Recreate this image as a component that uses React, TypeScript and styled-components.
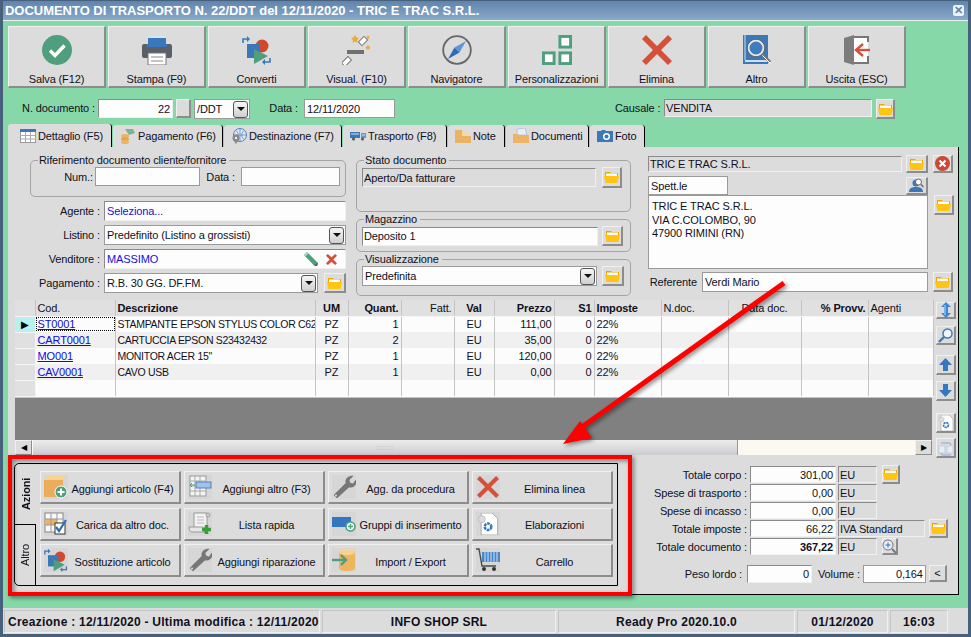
import React from 'react';
import styled, { createGlobalStyle } from 'styled-components';

const GlobalStyle = createGlobalStyle`
html, body {
  margin: 0;
  padding: 0;
  background: #86d8a8;
}
* { box-sizing: border-box; }
button { letter-spacing: inherit; }
`;

const Window = styled.div`
  position: relative;
  width: 971px;
  height: 637px;
  overflow: hidden;
  display: flex;
  flex-direction: column;
  background: #86d8a8;
  border: 3px solid #47617c;
  border-top: 1px solid #47617c;
  font-family: "Liberation Sans", Arial, sans-serif;
  font-size: 11px;
  letter-spacing: -0.12px;
  color: #10101c;
`;

const TitleBar = styled.div`
  height: 20px;
  flex: none;
  margin: 0 -3px;
  padding: 0 0 0 5px;
  display: flex;
  align-items: center;
  justify-content: space-between;
  background: linear-gradient(#5f84ad, #8aa9c9);
  border-bottom: 1px solid #e6f2ec;
  color: #fff;
  font-weight: bold;
  font-size: 13px;
  letter-spacing: -0.03px;
  white-space: nowrap;
`;

const CloseBox = styled.div`
  width: 11px;
  height: 11px;
  margin-right: 7px;
  border-radius: 2px;
  background: #eef3f8;
  color: #5f84ad;
  font-size: 11px;
  line-height: 11px;
  text-align: center;
`;

const Main = styled.div`
  flex: 1;
  min-height: 0;
  padding: 5px 0 0 5px;
  display: flex;
  flex-direction: column;
`;

const Toolbar = styled.div`
  display: flex;
  gap: 2px;
  flex: none;
`;

const raised = `
  background: #dcdcdc;
  border: 1px solid;
  border-color: #f0f0f0 #8c8c8c #8c8c8c #f0f0f0;
`;

const ToolButton = styled.button`
  ${raised}
  width: 98px;
  height: 62px;
  padding: 8px 0 0;
  font: inherit;
  color: inherit;
  display: flex;
  flex-direction: column;
  align-items: center;
  justify-content: space-between;
  border-width: 1px 2px 2px 1px;
`;

const ToolLabel = styled.span`
  height: 15px;
  margin-bottom: -1px;
  line-height: 15px;
  white-space: nowrap;
`;

const DocRow = styled.div`
  flex: none;
  height: 20px;
  margin-top: 11px;
  display: flex;
  align-items: flex-start;
  line-height: 18px;
`;

const Label = styled.span<{ $w?: number; $ml?: number }>`
  ${p => (p.$w ? `width: ${p.$w}px;` : '')}
  ${p => (p.$ml ? `margin-left: ${p.$ml}px;` : '')}
  flex: none;
  text-align: ${p => (p.$w ? 'right' : 'left')};
  white-space: nowrap;
`;

type FieldProps = {
  $w?: number;
  $h?: number;
  $gray?: boolean;
  $right?: boolean;
  $blue?: boolean;
  $bold?: boolean;
  $tall?: boolean;
  $tight?: boolean;
};

const Field = styled.div<FieldProps>`
  ${p => (p.$w ? `width: ${p.$w}px; flex: none;` : 'flex: 1; min-width: 0;')}
  height: ${p => p.$h ?? 20}px;
  padding: ${p => (p.$tall ? '4px 3px' : p.$tight || p.$gray ? '0 1px' : '0 2px')};
  display: ${p => (p.$tall ? 'block' : 'flex')};
  align-items: center;
  justify-content: ${p => (p.$right ? 'flex-end' : 'flex-start')};
  background: ${p => (p.$gray ? '#dcdcdc' : '#fdfdfd')};
  border: 1px solid;
  border-color: #8a8a8a #f0f0f0 #f0f0f0 #8a8a8a;
  color: ${p => (p.$blue ? '#1010e0' : 'inherit')};
  font-weight: ${p => (p.$bold ? 'bold' : 'normal')};
  white-space: ${p => (p.$tall ? 'pre-line' : 'nowrap')};
  line-height: ${p => (p.$tall ? '13.5px' : 'normal')};
`;

const OutlineField = styled(Field)`
  border-color: #9a9a9a;
`;

const CaretButton = styled.span`
  width: 15px;
  height: 17px;
  margin-left: auto;
  margin-right: -1px;
  flex: none;
  display: flex;
  align-items: center;
  justify-content: center;
  border: 1px solid #555;
  border-radius: 3px;
  background: linear-gradient(#f6f6f6, #cfcfcf);
  &::after {
    content: '';
    border: 4px solid transparent;
    border-top: 4px solid #111;
    border-bottom: 0;
  }
`;

const SquareButton = styled.button<{ $w?: number; $h?: number; $ml?: number }>`
  ${raised}
  width: ${p => p.$w ?? 20}px;
  height: ${p => p.$h ?? 20}px;
  margin: 0 0 0 ${p => p.$ml ?? 0}px;
  padding: 0;
  flex: none;
  display: flex;
  align-items: center;
  justify-content: center;
  font: inherit;
  color: inherit;
  border-width: 1px 2px 2px 1px;
`;

const Tabs = styled.div`
  flex: none;
  height: 23px;
  margin-top: 5px;
  display: flex;
  align-items: flex-end;
  gap: 1px;
`;

const Tab = styled.div<{ $w: number; $active?: boolean }>`
  width: ${p => p.$w}px;
  height: ${p => (p.$active ? 23 : 22)}px;
  flex: none;
  padding-left: ${p => (p.$active ? 12 : 7)}px;
  display: flex;
  align-items: center;
  gap: 2px;
  background: #dcdcdc;
  border-right: 1px solid #000;
  border-radius: 3px 3px 0 0;
  white-space: nowrap;
`;

const Panel = styled.div`
  width: 951px;
  height: 448px;
  flex: none;
  padding: 6px 0 0 7px;
  background: #dcdcdc;
  border-right: 1px solid #000;
  border-bottom: 1px solid #000;
`;

const TopArea = styled.div`
  height: 147px;
  padding-left: 15px;
  display: flex;
`;

const LeftCol = styled.div`
  width: 316px;
  flex: none;
  display: flex;
  flex-direction: column;
  gap: 4px;
`;

const MidCol = styled.div`
  width: 275px;
  margin-left: 10px;
  flex: none;
  display: flex;
  flex-direction: column;
`;

const RightCol = styled.div`
  width: 306px;
  margin-left: 17px;
  padding-top: 2px;
  flex: none;
  display: flex;
  flex-direction: column;
`;

const Group = styled.fieldset<{ $h: number }>`
  height: ${p => p.$h}px;
  margin: 0;
  padding: 0 5px;
  flex: none;
  min-width: 0;
  border: 1px solid #a4a4a4;
  border-radius: 5px;
`;

const Legend = styled.legend`
  margin-left: 2px;
  padding: 0 3px 0 1px;
  height: 14px;
  line-height: 14px;
`;

const Line = styled.div<{ $mt?: number; $top?: boolean }>`
  display: flex;
  align-items: ${p => (p.$top ? 'flex-start' : 'center')};
  margin-top: ${p => p.$mt ?? 0}px;
`;

const Spacer = styled.div<{ $w?: number }>`
  ${p => (p.$w ? `width: ${p.$w}px; flex: none;` : 'flex: 1;')}
`;

const GridArea = styled.div`
  height: 155px;
  display: flex;
`;

const GridFrame = styled.div`
  width: 917px;
  height: 155px;
  flex: none;
  display: flex;
  flex-direction: column;
`;

const Table = styled.table`
  width: 917px;
  flex: none;
  table-layout: fixed;
  border-collapse: collapse;
  background: #fcfcfc;
`;

const Th = styled.th<{ $align: string; $bold?: boolean }>`
  height: 16px;
  padding: 0 2px;
  background: #e0e0e0;
  border-right: 1px solid #c4c4c4;
  border-bottom: 1px solid #f4f4f4;
  text-align: ${p => p.$align};
  font-weight: ${p => (p.$bold ? 'bold' : 'normal')};
  white-space: nowrap;
  overflow: hidden;
`;

const Td = styled.td<{ $align: string; $alt?: boolean }>`
  height: 16px;
  padding: 0 2px;
  background: ${p => (p.$alt ? '#f0f0f0' : '#fcfcfc')};
  border-right: 1px solid #c4c4c4;
  text-align: ${p => p.$align};
  white-space: nowrap;
  overflow: hidden;
`;

const DescText = styled.span`
  font-size: 10.5px;
  letter-spacing: -0.3px;
`;

const Indicator = styled.td<{ $active?: boolean }>`
  height: 16px;
  padding: 0;
  background: ${p => (p.$active ? '#b8efef' : '#e0e0e0')};
  border-right: 1px solid #f4f4f4;
  border-bottom: 1px solid #f4f4f4;
  color: #000;
  text-align: center;
  font-size: 10px;
`;

const CodeLink = styled.a<{ $focus?: boolean }>`
  color: #0a0ae6;
  text-decoration: underline;
  ${p => (p.$focus ? 'outline: 1px dotted #000; display: block; margin: 0 -1px; padding: 0 1px;' : '')}
`;

const GrayFill = styled.div`
  flex: 1;
  background: #808080;
  border-top: 1px solid #c4c4c4;
`;

const ScrollBar = styled.div`
  height: 15px;
  flex: none;
  display: flex;
  background: #fbf9f0;
`;

const ScrollButton = styled.div`
  ${raised}
  width: 17px;
  flex: none;
  display: flex;
  align-items: center;
  justify-content: center;
  font-size: 8px;
  color: #000;
`;

const ScrollThumb = styled.div`
  width: 705px;
  margin-left: 1px;
  flex: none;
  display: flex;
  align-items: center;
  justify-content: center;
  background: linear-gradient(#ececec, #cbccd2);
  border-right: 1px solid #999;
  color: #a8a8a8;
  font-size: 7px;
  letter-spacing: 1px;
`;

const SideButtons = styled.div`
  width: 20px;
  margin-left: 4px;
  flex: none;
  display: flex;
  flex-direction: column;
  padding-top: 2px;
`;

const SideButton = styled(SquareButton)<{ $mt?: number }>`
  margin-top: ${p => p.$mt ?? 0}px;
`;

const BottomArea = styled.div`
  margin: 8px 0 0 -1px;
  display: flex;
`;

const ActionFrame = styled.div`
  width: 604px;
  height: 123px;
  flex: none;
  display: flex;
  border: 1px solid #000;
  border-radius: 5px 0 0 5px;
`;

const SideTabs = styled.div`
  width: 21px;
  flex: none;
  display: flex;
  flex-direction: column;
`;

const SideTab = styled.div<{ $active?: boolean; $h: number }>`
  height: ${p => p.$h}px;
  flex: none;
  display: flex;
  align-items: center;
  justify-content: center;
  writing-mode: vertical-rl;
  transform: rotate(180deg);
  font-weight: ${p => (p.$active ? 'bold' : 'normal')};
  ${p => (p.$active ? '' : 'border-bottom: 1px solid #000; border-left: 1px solid #000;')}
`;

const ActionGrid = styled.div`
  flex: 1;
  padding: 7px 0 0 4px;
  display: grid;
  grid-template-columns: repeat(4, 141px);
  grid-auto-rows: 33px;
  column-gap: 3px;
  row-gap: 3.5px;
  align-content: start;
`;

const ActionButton = styled.button`
  ${raised}
  padding: 0 2px 0 3px;
  display: flex;
  align-items: center;
  font: inherit;
  color: inherit;
  border-width: 1px 2px 2px 1px;
`;

const ActionSlot = styled.span`
  width: 24px;
  height: 24px;
  flex: none;
  display: flex;
  align-items: center;
  justify-content: center;
  background: #d6d6d6;
`;

const ActionLabel = styled.span`
  flex: 1;
  padding-top: 3px;
  text-align: center;
  white-space: nowrap;
`;

const Totals = styled.div`
  width: 320px;
  margin-left: 11px;
  padding-top: 3px;
  flex: none;
  display: flex;
  flex-direction: column;
  gap: 1px;
`;

const TotalRow = styled.div<{ $mt?: number }>`
  height: 17px;
  margin-top: ${p => p.$mt ?? 0}px;
  display: flex;
  align-items: center;
`;

const AmountField = styled(Field)`
  margin-left: 3px;
`;

const UnitField = styled(Field)`
  margin-left: 2px;
`;

const StatusBar = styled.div`
  height: 26px;
  flex: none;
  margin: 13px 0 0 -5px;
  padding: 2px 0 0 1px;
  display: flex;
  gap: 2px;
  background: #dcdcdc;
  font-weight: bold;
  font-size: 12px;
  letter-spacing: 0.25px;
`;

const StatusCell = styled.div<{ $w: number; $left?: boolean }>`
  width: ${p => p.$w}px;
  height: 23px;
  flex: none;
  display: flex;
  align-items: center;
  justify-content: ${p => (p.$left ? 'flex-start' : 'center')};
  padding-left: ${p => (p.$left ? 3 : 0)}px;
  border: 1px solid;
  border-color: #c4c4c4 #f0f0f0 #f0f0f0 #c4c4c4;
  white-space: nowrap;
`;

const Annotations = styled.svg`
  position: absolute;
  left: -3px;
  top: -1px;
  width: 971px;
  height: 637px;
  pointer-events: none;
  filter: drop-shadow(2px 2px 2px rgba(0, 0, 0, 0.45));
`;

const Svg = styled.svg`
  display: block;
  flex: none;
`;

type IconProps = { s?: number };

const CheckIcon = ({ s = 30 }: IconProps) => (
  <Svg width={s} height={s} viewBox="0 0 30 30">
    <circle cx="15" cy="15" r="15" fill="#4f9e7d" />
    <path d="M8 15.5l5 5 9.5-10" fill="none" stroke="#fff" strokeWidth="3.4" />
  </Svg>
);

const PrinterIcon = ({ s = 30 }: IconProps) => (
  <Svg width={s} height={s} viewBox="0 0 30 30">
    <rect x="6" y="1" width="18" height="10" fill="#3a78bd" />
    <rect x="6" y="1" width="18" height="2" fill="#fff" opacity=".8" />
    <rect x="0" y="9" width="30" height="14" rx="2" fill="#5b6068" />
    <rect x="5" y="9" width="20" height="3" fill="#3a78bd" />
    <rect x="6" y="18" width="18" height="12" fill="#fff" stroke="#777" />
    <path d="M9 22h12M9 26h12" stroke="#888" />
  </Svg>
);

const ConvertIcon = ({ s = 30 }: IconProps) => (
  <Svg width={s} height={s} viewBox="0 0 30 30">
    <circle cx="20" cy="11" r="6.5" fill="#d0492f" />
    <rect x="5" y="9" width="13" height="14" fill="#3b78b9" />
    <polygon points="12,14 26,21 12,29" fill="#4f9e7d" />
    <path d="M1 8V4h5M28 23v4h-6" fill="none" stroke="#3b78b9" strokeWidth="1.6" />
    <path d="M5 1l3 3-3 3M23 24l-3 3 3 3" fill="#3b78b9" />
  </Svg>
);

const WandIcon = ({ s = 30 }: IconProps) => (
  <Svg width={s} height={s} viewBox="0 0 30 30">
    <rect x="5" y="15" width="17" height="4" fill="#707070" />
    <rect x="17" y="3.5" width="8" height="5" transform="rotate(-45 21 6)" fill="#fff" stroke="#777" />
    <rect x="0" y="24" width="9" height="5" transform="rotate(-45 4.5 26.5)" fill="#fff" stroke="#777" />
    <path d="M13 0l1.5 2.5L17 3l-2 2 .5 3-2.5-1.5L10.5 8l.5-3-2-2 2.5-.5zM26 10l1 1.5 1.5.5-1 1 .2 2-1.7-1-1.7 1 .2-2-1-1 1.5-.5zM26 0l.8 1.5L28 2l-1.2 1 .2 1.5-1-1-1 1 .2-1.5-1.2-1 1.2-.5z" fill="#eca83c" />
  </Svg>
);

const CompassIcon = ({ s = 30 }: IconProps) => (
  <Svg width={s} height={s} viewBox="0 0 30 30">
    <circle cx="15" cy="15" r="13.8" fill="none" stroke="#666" strokeWidth="1.8" />
    <polygon points="24,6 17.5,17.5 12.5,12.5" fill="#5f97d6" />
    <polygon points="6,24 12.5,12.5 17.5,17.5" fill="#2f6cb3" />
  </Svg>
);

const BlocksIcon = ({ s = 30 }: IconProps) => (
  <Svg width={s} height={s} viewBox="0 0 31 31">
    <g fill="#fff" stroke="#4f9e7d" strokeWidth="3">
      <rect x="18.5" y="1.5" width="11" height="11" />
      <rect x="1.5" y="18.5" width="11" height="11" />
      <rect x="18.5" y="18.5" width="11" height="11" />
    </g>
  </Svg>
);

const CrossIcon = ({ s = 30 }: IconProps) => (
  <Svg width={s} height={s} viewBox="0 0 30 30">
    <path d="M4 0l11 11L26 0l4 4-11 11 11 11-4 4-11-11L4 30l-4-4 11-11L0 4z" fill="#d5503a" />
  </Svg>
);

const BookIcon = ({ s = 30 }: IconProps) => (
  <Svg width={s} height={s} viewBox="0 0 30 30">
    <rect x="1" y="0" width="25" height="29" fill="#3c78b8" />
    <rect x="3" y="25" width="23" height="2" fill="#cfe0f0" />
    <path d="M3 0v25" stroke="#cfe0f0" />
    <circle cx="14" cy="13" r="7.5" fill="#3f7cc0" stroke="#e8e8e8" strokeWidth="2" />
    <circle cx="14" cy="13" r="8.8" fill="none" stroke="#666" />
    <path d="M20 19l8 8" stroke="#777" strokeWidth="3" />
    <path d="M20.5 20.5l8 8" stroke="#fff" />
  </Svg>
);

const ExitIcon = ({ s = 30 }: IconProps) => (
  <Svg width={s} height={s} viewBox="0 0 30 30">
    <rect x="10" y="2" width="16" height="26" fill="#fff" />
    <path d="M10 2h16v5M26 21v7H10" fill="none" stroke="#777" strokeWidth="2" />
    <polygon points="2,3 12,0 12,30 2,27" fill="#7c7c7c" />
    <path d="M14 15h14" stroke="#d5503a" strokeWidth="2.4" />
    <path d="M21 9l-7 6 7 6" fill="none" stroke="#d5503a" strokeWidth="2.4" />
  </Svg>
);

const FolderIcon = () => (
  <Svg width="15" height="12" viewBox="0 0 15 12">
    <path d="M1 1h5l1 1h7v4H1z" fill="#f0a400" />
    <rect x="2" y="2.5" width="11" height="2.5" fill="#fff" />
    <path d="M0 5h15l-1.5 7h-12z" fill="#ffc414" />
  </Svg>
);

const TableIcon = ({ s = 16 }: IconProps) => (
  <Svg width={s} height={s} viewBox="0 0 16 16">
    <rect x=".5" y="1.5" width="15" height="13" fill="#fff" stroke="#999" />
    <rect x="0" y="1" width="16" height="3" fill="#3c78b8" />
    <path d="M0 7.5h16M0 11h16M5.5 4v10M10.5 4v10" stroke="#aaa" />
  </Svg>
);

const CoinsIcon = () => (
  <Svg width="16" height="16" viewBox="0 0 16 16">
    <path d="M5 1h8l2 4-6 2z" fill="#79b497" />
    <ellipse cx="5" cy="8" rx="4" ry="2" fill="#edb45b" />
    <ellipse cx="5" cy="11" rx="4" ry="2" fill="#e2a54d" />
    <ellipse cx="5" cy="14" rx="4" ry="2" fill="#edb45b" />
  </Svg>
);

const GlobeIcon = () => (
  <Svg width="16" height="16" viewBox="0 0 16 16">
    <circle cx="9" cy="7" r="6.5" fill="#dfe8f2" stroke="#4f82bd" />
    <path d="M2.5 7h13M9 .5v13M5 2.5c3 3 3 6 0 9M13 2.5c-3 3-3 6 0 9" fill="none" stroke="#4f82bd" strokeWidth=".7" />
    <circle cx="5" cy="10" r="3.5" fill="#888" />
    <circle cx="5" cy="10" r="1.2" fill="#eee" />
    <path d="M3 13l2 3 2-3z" fill="#888" />
  </Svg>
);

const TruckIcon = () => (
  <Svg width="16" height="16" viewBox="0 0 16 16">
    <rect x="0" y="4" width="10" height="6" fill="#3c78b8" />
    <rect x="11" y="5" width="5" height="5" fill="#5f97d6" />
    <path d="M1 6h8M12 7h3" stroke="#cfe0f0" />
    <circle cx="3.5" cy="11" r="1.5" fill="#555" />
    <circle cx="12.5" cy="11" r="1.5" fill="#555" />
  </Svg>
);

const NoteIcon = () => (
  <Svg width="16" height="16" viewBox="0 0 16 16">
    <path d="M0 2h7v6h9v7H0z" fill="#e9b265" />
    <path d="M7 2l9 6H7z" fill="#f4d7a8" />
  </Svg>
);

const DocsIcon = () => (
  <Svg width="16" height="16" viewBox="0 0 16 16">
    <path d="M4 1l8-1 2 7H4z" fill="#e8eef5" stroke="#9fb4c9" strokeWidth=".6" />
    <path d="M0 6h5l1 1h10v8H0z" fill="#ecb566" />
  </Svg>
);

const CameraIcon = () => (
  <Svg width="16" height="16" viewBox="0 0 16 16">
    <path d="M0 3h4l1-1h3l1 1h7v11H0z" fill="#3c78b8" />
    <circle cx="9.5" cy="8.5" r="3.5" fill="#fff" />
    <circle cx="9.5" cy="8.5" r="2" fill="#3c78b8" />
  </Svg>
);

const PencilIcon = () => (
  <Svg width="15" height="15" viewBox="0 0 15 15">
    <path d="M3 0l11 11-1 3-3-.5L0 3z" fill="#4f9e7d" />
    <path d="M3 0L0 3l1.5 1.5 3-3z" fill="#a9d8bd" />
    <path d="M10 13.5l3 .5 1-3z" fill="#555" />
  </Svg>
);

const SmallCrossIcon = () => (
  <Svg width="11" height="11" viewBox="0 0 30 30">
    <path d="M5 0l10 9L25 0l5 5-10 10 10 10-5 5-10-9-10 9-5-5 10-10L0 5z" fill="#d5503a" />
  </Svg>
);

const CloseRoundIcon = () => (
  <Svg width="15" height="15" viewBox="0 0 15 15">
    <circle cx="7.5" cy="7.5" r="7.5" fill="#cc4a33" />
    <path d="M4.5 4.5l6 6M10.5 4.5l-6 6" stroke="#fff" strokeWidth="2" />
  </Svg>
);

const PersonIcon = () => (
  <Svg width="15" height="14" viewBox="0 0 15 14">
    <circle cx="7" cy="5" r="3.5" fill="#3c78b8" />
    <path d="M0 14c0-4 3-5 7-5s7 1 7 5z" fill="#3c78b8" />
    <circle cx="9.5" cy="4" r="3" fill="#fff" stroke="#666" />
    <path d="M12 6.5l2.5 2.5" stroke="#666" strokeWidth="1.4" />
  </Svg>
);

const UpDownIcon = () => (
  <Svg width="10" height="16" viewBox="0 0 10 16">
    <path d="M5 0l5 5H7v6h3l-5 5-5-5h3V5H0z" fill="#3d86d2" />
    <path d="M4 3v10" stroke="#b8dcff" />
  </Svg>
);

const SearchIcon = () => (
  <Svg width="15" height="15" viewBox="0 0 15 15">
    <circle cx="9.5" cy="5.5" r="4.5" fill="#eef5fc" stroke="#3d78b8" strokeWidth="1.5" />
    <path d="M6 9l-5 5" stroke="#3d78b8" strokeWidth="2.4" />
  </Svg>
);

const ArrowIcon = ({ down }: { down?: boolean }) => (
  <Svg width="13" height="13" viewBox="0 0 13 13">
    <path d={down ? 'M4 0h5v6h4l-6.5 7L0 6h4z' : 'M4 13h5V7h4L6.5 0 0 7h4z'} fill="#3477c0" />
  </Svg>
);

const GearDocIcon = ({ s = 16 }: IconProps) => (
  <Svg width={s} height={s} viewBox="0 0 16 16">
    <path d="M3 0h8l4 4v12H3z" fill="#fff" stroke="#aaa" strokeWidth=".7" />
    <circle cx="8" cy="10" r="2.4" fill="none" stroke="#3477c0" strokeWidth="1.8" strokeDasharray="2 .6" />
    <circle cx="3.5" cy="4.5" r="2.5" fill="#ddd" stroke="#bbb" strokeWidth=".6" />
  </Svg>
);

const SwapDocIcon = () => (
  <Svg width="16" height="16" viewBox="0 0 16 16">
    <rect x="1" y="6" width="6" height="7" fill="#e6ecf3" stroke="#b8c6d6" strokeWidth=".7" />
    <rect x="9" y="6" width="6" height="7" fill="#e6ecf3" stroke="#b8c6d6" strokeWidth=".7" />
    <path d="M3 3h9l1 2M13 15H4l-1-2" fill="none" stroke="#7fa9d6" />
  </Svg>
);

const BoxAddIcon = () => (
  <Svg width="24" height="24" viewBox="0 0 24 24">
    <path d="M0 5h19l3-4H4z" fill="#f6d394" />
    <rect x="0" y="5" width="19" height="17" fill="#e9ad5c" />
    <circle cx="17" cy="17" r="6" fill="#4f9e7d" stroke="#fff" />
    <path d="M13.5 17h7M17 13.5v7" stroke="#fff" strokeWidth="2" />
  </Svg>
);

const TableAddIcon = () => (
  <Svg width="24" height="24" viewBox="0 0 24 24">
    <rect x="2" y="1" width="16" height="20" fill="#f4f4f4" stroke="#999" />
    <path d="M2 6h16M2 11h16M2 16h16M7 1v20M12 1v20" stroke="#aaa" />
    <rect x="8" y="7" width="15" height="6" fill="#9fc3e8" stroke="#4f82bd" />
    <path d="M2 10h5M4 8l-2 2 2 2" fill="none" stroke="#4f9e7d" />
  </Svg>
);

const TableCheckIcon = () => (
  <Svg width="24" height="24" viewBox="0 0 24 24">
    <rect x="1" y="1" width="18" height="19" fill="#f8f8f8" stroke="#888" />
    <rect x="1" y="7" width="12" height="6" fill="#f0b25c" />
    <path d="M1 7h18M1 13h18M7 1v19M13 1v19" stroke="#999" />
    <rect x="11" y="11" width="10" height="11" fill="#fff" stroke="#333" />
    <path d="M12 15l3 4 7-11" fill="none" stroke="#2f6cb3" strokeWidth="2.2" />
  </Svg>
);

const ScrollAddIcon = () => (
  <Svg width="24" height="24" viewBox="0 0 24 24">
    <path d="M6 1h13v15H6z" fill="#f2f2f2" stroke="#999" />
    <path d="M1 15h14c0 3 0 5 2 5H4c-2 0-3-2-3-5z" fill="#e6e6e6" stroke="#999" />
    <path d="M9 5h7M9 8h7M9 11h7" stroke="#bbb" />
    <circle cx="20" cy="3" r="2" fill="#ccc" stroke="#888" strokeWidth=".6" />
    <path d="M14 17.5h9M18.5 13v9" stroke="#34a03a" strokeWidth="3.6" />
  </Svg>
);

const WrenchIcon = () => (
  <Svg width="24" height="24" viewBox="0 0 24 24">
    <path d="M2 20L14 8c-1-4 2-7 7-7l-4 4 1 3 3 1 3-4c1 5-3 8-7 7L5 23z" fill="#777" stroke="#666" strokeWidth=".5" />
    <circle cx="4" cy="20.5" r="1" fill="#ddd" />
  </Svg>
);

const BarAddIcon = () => (
  <Svg width="24" height="24" viewBox="0 0 24 24">
    <rect x="0" y="5" width="19" height="10" fill="#3477c0" />
    <circle cx="18.5" cy="14.5" r="4.5" fill="#fff" stroke="#4f9e7d" strokeWidth="1.6" />
    <path d="M16 14.5h5M18.5 12v5" stroke="#4f9e7d" strokeWidth="1.4" />
  </Svg>
);

const CylinderIcon = () => (
  <Svg width="24" height="24" viewBox="0 0 24 24">
    <path d="M7 4v16c0 2 4 3 8 3s8-1 8-3V4z" fill="#eeb45e" />
    <ellipse cx="15" cy="4" rx="8" ry="3.2" fill="#f6d394" />
    <path d="M0 12h13" stroke="#4f9e7d" strokeWidth="2.4" />
    <path d="M9 7l5 5-5 5" fill="none" stroke="#4f9e7d" strokeWidth="2.4" />
  </Svg>
);

const CartIcon = () => (
  <Svg width="24" height="24" viewBox="0 0 24 24">
    <path d="M0 1h3l3 17h14" fill="none" stroke="#4a4a4a" strokeWidth="1.4" />
    <rect x="6" y="4" width="18" height="10" fill="#4886c8" />
    <path d="M9 4v10M12 4v10M15 4v10M18 4v10M21 4v10" stroke="#cfe3f7" />
    <circle cx="8" cy="21" r="2" fill="#333" />
    <circle cx="18" cy="21" r="2" fill="#333" />
  </Svg>
);

const ZoomPlusIcon = () => (
  <Svg width="15" height="15" viewBox="0 0 15 15">
    <circle cx="6" cy="6" r="5" fill="#e6ecf3" stroke="#777" />
    <path d="M3.5 6h5M6 3.5v5" stroke="#3477c0" />
    <path d="M10 10l4 4" stroke="#777" strokeWidth="2" />
  </Svg>
);

const toolButtons: { label: string; Icon: React.FC<IconProps> }[] = [
  { label: 'Salva (F12)', Icon: CheckIcon },
  { label: 'Stampa (F9)', Icon: PrinterIcon },
  { label: 'Converti', Icon: ConvertIcon },
  { label: 'Visual. (F10)', Icon: WandIcon },
  { label: 'Navigatore', Icon: CompassIcon },
  { label: 'Personalizzazioni', Icon: BlocksIcon },
  { label: 'Elimina', Icon: CrossIcon },
  { label: 'Altro', Icon: BookIcon },
  { label: 'Uscita (ESC)', Icon: ExitIcon },
];

const tabs = [
  { label: 'Dettaglio (F5)', w: 104, icon: <TableIcon />, active: true },
  { label: 'Pagamento (F6)', w: 110, icon: <CoinsIcon /> },
  { label: 'Destinazione (F7)', w: 118, icon: <GlobeIcon /> },
  { label: 'Trasporto (F8)', w: 104, icon: <TruckIcon /> },
  { label: 'Note', w: 57, icon: <NoteIcon /> },
  { label: 'Documenti', w: 83, icon: <DocsIcon /> },
  { label: 'Foto', w: 55, icon: <CameraIcon /> },
];

const columns = [
  { title: 'Cod.', w: 80, align: 'left' },
  { title: 'Descrizione', w: 200, align: 'left', bold: true },
  { title: 'UM', w: 33, align: 'center', bold: true },
  { title: 'Quant.', w: 53, align: 'right', bold: true },
  { title: 'Fatt.', w: 53, align: 'right' },
  { title: 'Val', w: 40, align: 'center', bold: true },
  { title: 'Prezzo', w: 60, align: 'right', bold: true },
  { title: 'S1', w: 40, align: 'right', bold: true },
  { title: 'Imposte', w: 67, align: 'left', bold: true },
  { title: 'N.doc.', w: 67, align: 'left' },
  { title: 'Data doc.', w: 73, align: 'center' },
  { title: '% Provv.', w: 67, align: 'right', bold: true },
  { title: 'Agenti', w: 65, align: 'left' },
];

const rows = [
  ['ST0001', 'STAMPANTE EPSON STYLUS COLOR C62', 'PZ', '1', '', 'EU', '111,00', '0', '22%', '', '', '', ''],
  ['CART0001', 'CARTUCCIA EPSON S23432432', 'PZ', '2', '', 'EU', '35,00', '0', '22%', '', '', '', ''],
  ['MO001', 'MONITOR ACER 15"', 'PZ', '1', '', 'EU', '120,00', '0', '22%', '', '', '', ''],
  ['CAV0001', 'CAVO USB', 'PZ', '1', '', 'EU', '0,00', '0', '22%', '', '', '', ''],
  ['', '', '', '', '', '', '', '', '', '', '', '', ''],
];

const actions = [
  { label: 'Aggiungi articolo (F4)', icon: <BoxAddIcon /> },
  { label: 'Aggiungi altro (F3)', icon: <TableAddIcon /> },
  { label: 'Agg. da procedura', icon: <WrenchIcon /> },
  { label: 'Elimina linea', icon: <CrossIcon s={22} /> },
  { label: 'Carica da altro doc.', icon: <TableCheckIcon /> },
  { label: 'Lista rapida', icon: <ScrollAddIcon /> },
  { label: 'Gruppi di inserimento', icon: <BarAddIcon /> },
  { label: 'Elaborazioni', icon: <GearDocIcon s={22} /> },
  { label: 'Sostituzione articolo', icon: <ConvertIcon s={24} /> },
  { label: 'Aggiungi riparazione', icon: <WrenchIcon /> },
  { label: 'Import / Export', icon: <CylinderIcon /> },
  { label: 'Carrello', icon: <CartIcon /> },
];

const Folder = ({ w, h, ml }: { w?: number; h?: number; ml?: number }) => (
  <SquareButton $w={w} $h={h} $ml={ml}>
    <FolderIcon />
  </SquareButton>
);

const DocField = styled(Field)<{ $ml: number }>`
  margin-left: ${p => p.$ml}px;
`;

const DocOutline = styled(OutlineField)<{ $ml: number }>`
  margin-left: ${p => p.$ml}px;
`;

export default function App() {
  return (
    <Window>
      <GlobalStyle />
      <TitleBar>
        DOCUMENTO DI TRASPORTO N. 22/DDT del 12/11/2020 - TRIC E TRAC S.R.L.
        <CloseBox>✕</CloseBox>
      </TitleBar>
      <Main>
        <Toolbar>
          {toolButtons.map(({ label, Icon }) => (
            <ToolButton key={label}>
              <Icon />
              <ToolLabel>{label}</ToolLabel>
            </ToolButton>
          ))}
        </Toolbar>

        <DocRow>
          <Label $ml={12} $w={75}>N. documento :</Label>
          <DocField $ml={3} $w={75} $right $h={19}>22</DocField>
          <SquareButton $w={15} $h={19} $ml={3} />
          <DocOutline $ml={3} $w={56} $h={20}>
            /DDT
            <CaretButton />
          </DocOutline>
          <Label $ml={19} $w={29}>Data :</Label>
          <DocOutline $ml={6} $w={91} $h={19}>12/11/2020</DocOutline>
          <Label $ml={220} $w={45}>Causale :</Label>
          <DocField $ml={4} $w={208} $h={18} $gray>VENDITA</DocField>
          <Folder w={19} ml={4} />
        </DocRow>

        <Tabs>
          {tabs.map(t => (
            <Tab key={t.label} $w={t.w} $active={t.active}>
              {t.icon}
              {t.label}
            </Tab>
          ))}
        </Tabs>

        <Panel>
          <TopArea>
            <LeftCol>
              <Group $h={44}>
                <Legend>Riferimento documento cliente/fornitore</Legend>
                <Line>
                  <Label $w={57}>Num.:</Label>
                  <DocOutline $ml={2} $w={105} $h={19} />
                  <Label $ml={5} $w={30}>Data :</Label>
                  <DocOutline $ml={6} $w={99} $h={19} />
                </Line>
              </Group>
              <Line>
                <Label $w={70}>Agente :</Label>
                <DocField $ml={4} $w={242} $blue>Seleziona...</DocField>
              </Line>
              <Line>
                <Label $w={70}>Listino :</Label>
                <DocOutline $ml={4} $w={242}>
                  Predefinito (Listino a grossisti)
                  <CaretButton />
                </DocOutline>
              </Line>
              <Line>
                <Label $w={70}>Venditore :</Label>
                <DocField $ml={4} $w={242} $blue>
                  MASSIMO
                  <Spacer />
                  <PencilIcon />
                  <Spacer $w={7} />
                  <SmallCrossIcon />
                  <Spacer $w={6} />
                </DocField>
              </Line>
              <Line>
                <Label $w={70}>Pagamento :</Label>
                <DocOutline $ml={4} $w={214}>
                  R.B. 30 GG. DF.FM.
                  <CaretButton />
                </DocOutline>
                <Folder w={22} ml={6} />
              </Line>
            </LeftCol>

            <MidCol>
              <Group $h={59}>
                <Legend>Stato documento</Legend>
                <Line>
                  <Field $w={234} $gray $h={19}>Aperto/Da fatturare</Field>
                  <Folder w={20} h={21} ml={6} />
                </Line>
              </Group>
              <Group $h={40}>
                <Legend>Magazzino</Legend>
                <Line>
                  <Field $w={236} $h={19} $tight>Deposito 1</Field>
                  <Folder w={21} ml={4} />
                </Line>
              </Group>
              <Group $h={44}>
                <Legend>Visualizzazione</Legend>
                <Line>
                  <OutlineField $w={235}>
                    Predefinita
                    <CaretButton />
                  </OutlineField>
                  <Folder w={22} ml={5} />
                </Line>
              </Group>
            </MidCol>

            <RightCol>
              <Line>
                <Field $w={254} $h={16} $gray>TRIC E TRAC S.R.L.</Field>
                <Folder w={22} h={18} ml={4} />
                <SquareButton $w={20} $h={18} $ml={5}>
                  <CloseRoundIcon />
                </SquareButton>
              </Line>
              <Line $mt={3}>
                <OutlineField $w={80} $h={19}>Spett.le</OutlineField>
                <SquareButton $w={22} $h={18} $ml={178}>
                  <PersonIcon />
                </SquareButton>
              </Line>
              <Line $top>
                <OutlineField $w={280} $h={74} $tall>
                  {'TRIC E TRAC S.R.L.\nVIA C.COLOMBO, 90\n47900 RIMINI (RN)'}
                </OutlineField>
                <Folder w={20} ml={6} />
              </Line>
              <Line $mt={3}>
                <Label $w={49}>Referente</Label>
                <DocOutline $ml={5} $w={226}>Verdi Mario</DocOutline>
                <Folder w={20} ml={5} />
              </Line>
            </RightCol>
          </TopArea>

          <GridArea>
            <GridFrame>
              <Table>
                <colgroup>
                  <col style={{ width: 20 }} />
                  {columns.map(c => (
                    <col key={c.title} style={{ width: c.w }} />
                  ))}
                </colgroup>
                <thead>
                  <tr>
                    <Th $align="left" />
                    {columns.map(c => (
                      <Th key={c.title} $align={c.align} $bold={c.bold}>{c.title}</Th>
                    ))}
                  </tr>
                </thead>
                <tbody>
                  {rows.map((row, r) => (
                    <tr key={r}>
                      <Indicator $active={r === 0}>{r === 0 ? '▶' : ''}</Indicator>
                      {row.map((cell, c) => (
                        <Td key={c} $align={columns[c].align} $alt={r % 2 === 1}>
                          {c === 0 && cell ? (
                            <CodeLink $focus={r === 0}>{cell}</CodeLink>
                          ) : c === 1 ? (
                            <DescText>{cell}</DescText>
                          ) : (
                            cell
                          )}
                        </Td>
                      ))}
                    </tr>
                  ))}
                </tbody>
              </Table>
              <GrayFill />
              <ScrollBar>
                <ScrollButton>◀</ScrollButton>
                <ScrollThumb>::::::</ScrollThumb>
                <Spacer />
                <ScrollButton>▶</ScrollButton>
              </ScrollBar>
            </GridFrame>
            <SideButtons>
              <SideButton $h={17}><UpDownIcon /></SideButton>
              <SideButton $h={19} $mt={7}><SearchIcon /></SideButton>
              <SideButton $h={20} $mt={10}><ArrowIcon /></SideButton>
              <SideButton $h={20} $mt={6}><ArrowIcon down /></SideButton>
              <SideButton $h={20} $mt={12}><GearDocIcon /></SideButton>
              <SideButton $h={20} $mt={5}><SwapDocIcon /></SideButton>
            </SideButtons>
          </GridArea>

          <BottomArea>
            <ActionFrame>
              <SideTabs>
                <SideTab $active $h={60}>Azioni</SideTab>
                <SideTab $h={61}>Altro</SideTab>
              </SideTabs>
              <ActionGrid>
                {actions.map(a => (
                  <ActionButton key={a.label}>
                    <ActionSlot>{a.icon}</ActionSlot>
                    <ActionLabel>{a.label}</ActionLabel>
                  </ActionButton>
                ))}
              </ActionGrid>
            </ActionFrame>

            <Totals>
              <TotalRow>
                <Label $w={118}>Totale corpo :</Label>
                <AmountField $w={86} $h={17} $right>301,00</AmountField>
                <UnitField $w={39} $h={17} $gray>EU</UnitField>
                <Folder w={18} h={19} ml={5} />
              </TotalRow>
              <TotalRow>
                <Label $w={118}>Spese di trasporto :</Label>
                <AmountField $w={86} $h={17} $right>0,00</AmountField>
                <UnitField $w={39} $h={17} $gray>EU</UnitField>
              </TotalRow>
              <TotalRow>
                <Label $w={118}>Spese di incasso :</Label>
                <AmountField $w={86} $h={17} $right>0,00</AmountField>
                <UnitField $w={39} $h={17} $gray>EU</UnitField>
              </TotalRow>
              <TotalRow>
                <Label $w={118}>Totale imposte :</Label>
                <AmountField $w={86} $h={17} $right>66,22</AmountField>
                <UnitField $w={87} $h={17} $gray>IVA Standard</UnitField>
                <Folder w={19} h={19} ml={4} />
              </TotalRow>
              <TotalRow>
                <Label $w={118}>Totale documento :</Label>
                <AmountField $w={86} $h={17} $right $bold>367,22</AmountField>
                <UnitField $w={39} $h={17} $gray>EU</UnitField>
                <SquareButton $w={16} $h={17} $ml={5}><ZoomPlusIcon /></SquareButton>
              </TotalRow>
              <TotalRow $mt={9}>
                <Label $w={113}>Peso lordo :</Label>
                <DocField $ml={5} $w={65} $h={18} $right>0</DocField>
                <Label $ml={6}>Volume :</Label>
                <DocOutline $ml={3} $w={63} $h={18} $right>0,164</DocOutline>
                <SquareButton $w={18} $h={17} $ml={3}>&lt;</SquareButton>
              </TotalRow>
            </Totals>
          </BottomArea>
        </Panel>

        <StatusBar>
          <StatusCell $w={316} $left>Creazione : 12/11/2020 - Ultima modifica : 12/11/2020</StatusCell>
          <StatusCell $w={234}>INFO SHOP SRL</StatusCell>
          <StatusCell $w={237}>Ready Pro 2020.10.0</StatusCell>
          <StatusCell $w={91}>01/12/2020</StatusCell>
          <StatusCell $w={58}>16:03</StatusCell>
        </StatusBar>
      </Main>

      <Annotations viewBox="0 0 971 637">
        <rect x="10" y="457" width="620" height="137" fill="none" stroke="#f00" strokeWidth="4" />
        <path d="M784 283L575 432" stroke="#f00" strokeWidth="5" />
        <polygon points="563,444 580,421 592,438" fill="#f00" />
      </Annotations>
    </Window>
  );
}
